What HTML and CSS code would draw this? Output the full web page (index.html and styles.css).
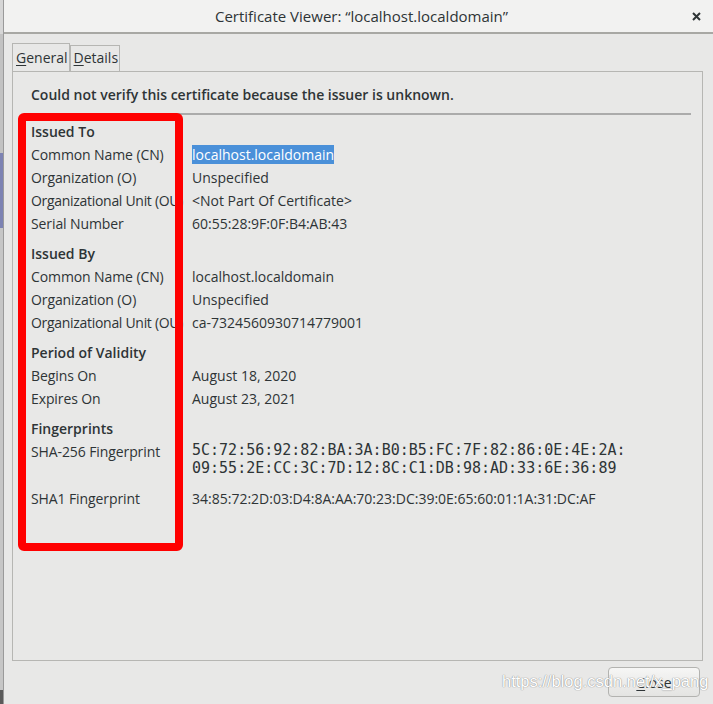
FILE: index.html
```html
<!DOCTYPE html>
<html lang="en">
<head>
<meta charset="utf-8">
<title>Certificate Viewer</title>
<link rel="stylesheet" href="styles.css">
</head>
<body>
<div class="screen">
  <div class="behind"></div>
  <div class="dialog">
    <header class="titlebar">
      <span class="title">Certificate Viewer: “localhost.localdomain”</span>
      <svg class="close-x" width="9" height="9" viewBox="0 0 9 9"><path d="M1 1L8 8M8 1L1 8"/></svg>
    </header>
    <main class="content">
      <nav class="tabs">
        <span class="tab active"><u>G</u>eneral</span>
        <span class="tab"><u>D</u>etails</span>
      </nav>
      <section class="frame">
        <p class="notice">Could not verify this certificate because the issuer is unknown.</p>
        <hr class="sep">
        <div class="fields">
          <div class="heading">Issued To</div>
          <div class="row"><span class="k">Common Name (CN)</span><span class="v"><span class="sel">localhost.localdomain</span></span></div>
          <div class="row"><span class="k">Organization (O)</span><span class="v">Unspecified</span></div>
          <div class="row"><span class="k long">Organizational Unit (OU)</span><span class="v">&lt;Not Part Of Certificate&gt;</span></div>
          <div class="row"><span class="k">Serial Number</span><span class="v">60:55:28:9F:0F:B4:AB:43</span></div>

          <div class="heading gap">Issued By</div>
          <div class="row"><span class="k">Common Name (CN)</span><span class="v">localhost.localdomain</span></div>
          <div class="row"><span class="k">Organization (O)</span><span class="v">Unspecified</span></div>
          <div class="row"><span class="k long">Organizational Unit (OU)</span><span class="v">ca-7324560930714779001</span></div>

          <div class="heading gap">Period of Validity</div>
          <div class="row"><span class="k">Begins On</span><span class="v">August 18, 2020</span></div>
          <div class="row"><span class="k">Expires On</span><span class="v">August 23, 2021</span></div>

          <div class="heading gap">Fingerprints</div>
          <div class="row"><span class="k">SHA-256 Fingerprint</span><span class="v mono">5C:72:56:92:82:BA:3A:B0:B5:FC:7F:82:86:0E:4E:2A:<br>09:55:2E:CC:3C:7D:12:8C:C1:DB:98:AD:33:6E:36:89</span></div>
          <div class="row sha1"><span class="k">SHA1 Fingerprint</span><span class="v">34:85:72:2D:03:D4:8A:AA:70:23:DC:39:0E:65:60:01:1A:31:DC:AF</span></div>
        </div>
      </section>
      <div class="actions">
        <button class="btn" type="button"><u>C</u>lose</button>
      </div>
    </main>
  </div>
</div>
<div class="annot"></div>
<div class="watermark">https://blog.csdn.net/x_pang</div>
</body>
</html>
```

FILE: styles.css
```css
* { box-sizing: border-box; }

body {
  margin: 0;
  width: 713px;
  height: 704px;
  overflow: hidden;
  position: relative;
  font-family: "Open Sans", "DejaVu Sans", sans-serif;
  font-size: 14px;
  color: #2e3436;
  background: #e8e8e7;
}

.screen {
  display: flex;
  height: 704px;
}

.behind {
  flex: none;
  width: 4px;
  border-right: 1px solid #9a9a9a;
  background: linear-gradient(to bottom,
    #d6d6d6 0 34px,
    #c2c2c2 34px 153px,
    #7d83b3 153px 228px,
    #c6c6c6 228px 690px,
    #5a5a5a 690px);
}

.dialog {
  flex: 1;
  display: flex;
  flex-direction: column;
  background: #e8e8e7;
}

.titlebar {
  flex: none;
  height: 34px;
  border-bottom: 2px solid #a8a8a4;
  background: #f2f2f1;
  display: grid;
  grid-template-columns: 1fr auto 1fr;
  align-items: center;
  padding: 0 12px 0 0;
}

.title {
  grid-column: 2;
  font-size: 15px;
  line-height: 20px;
  color: #2e3436;
  padding-left: 18px;
}

.close-x {
  grid-column: 3;
  justify-self: end;
  fill: none;
  stroke: #2e3436;
  stroke-width: 2;
}

.content {
  flex: 1;
  display: flex;
  flex-direction: column;
  padding: 9px 10px 7px 8px;
}

.tabs {
  display: flex;
  align-items: flex-end;
  height: 28px;
}

.tab {
  border: 1px solid #b6b6b3;
  border-bottom: none;
  padding: 0 1px 0 3px;
  line-height: 24px;
  height: 26px;
}

.tab.active {
  height: 28px;
  line-height: 27px;
  padding: 0 1px 0 3px;
}

.tab u, .btn u {
  text-decoration-thickness: 1px;
  text-underline-offset: 2px;
}

.frame {
  flex: 1;
  border: 1px solid #b6b6b3;
  padding: 13px 11px 0 18px;
}

.notice {
  margin: 0;
  font-weight: 600;
  line-height: 20px;
}

.sep {
  margin: 8px 0 0 -3px;
  border: none;
  height: 2px;
  background: #ababab;
}

.fields {
  margin-top: 5px;
  display: flex;
  flex-direction: column;
}

.heading {
  font-weight: 600;
  line-height: 23px;
}

.heading.gap {
  margin-top: 7px;
}

.row {
  display: grid;
  grid-template-columns: 161px auto;
  align-items: start;
  line-height: 23px;
}

.k {
  white-space: nowrap;
  letter-spacing: -0.1px;
}

.k.long {
  letter-spacing: -0.3px;
}

.v {
  white-space: nowrap;
}

.sel {
  background: #4a90d9;
  color: #ffffff;
}

.mono {
  font-family: "DejaVu Sans Mono", monospace;
  font-size: 15px;
  line-height: 17.5px;
  padding-top: 2px;
}

.row.sha1 {
  margin-top: 10px;
}

.actions {
  display: flex;
  justify-content: flex-end;
  padding-top: 6px;
}

.btn {
  width: 92px;
  height: 30px;
  margin-right: 3px;
  font-family: "Open Sans", "DejaVu Sans", sans-serif;
  font-size: 14px;
  color: #2e3436;
  border: 1px solid #b3b3b0;
  border-radius: 4px;
  background: linear-gradient(to bottom, #f6f6f5, #e4e4e2);
  padding: 0;
}

.annot {
  position: absolute;
  left: 18px;
  top: 113px;
  width: 165px;
  height: 438px;
  border: 8px solid #ff0000;
  border-radius: 6px;
}

.watermark {
  position: absolute;
  left: 502px;
  top: 672px;
  font-family: "Liberation Sans", Arial, sans-serif;
  font-size: 16.5px;
  color: #ffffff;
  text-shadow: 0 0 1px #8a8a8a, 0 0 1px #9a9a9a;
  white-space: nowrap;
}
```
